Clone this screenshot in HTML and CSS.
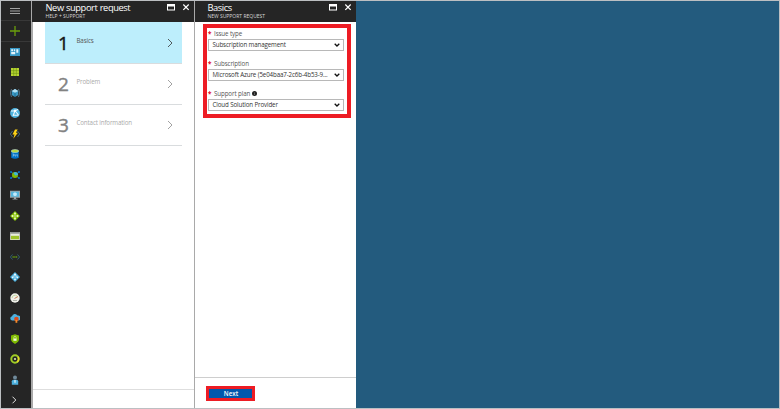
FILE: index.html
```html
<!DOCTYPE html>
<html lang="en">
<head>
<meta charset="utf-8">
<title>New support request</title>
<link rel="stylesheet" href="styles.css">
</head>
<body>
<div class="portal">
  <nav class="rail">
    <span class="cell menu"><svg viewBox="0 0 10 10"><path d="M0 2.5h10M0 5h10M0 7.5h10" stroke="#c4c4c4" stroke-width=".8"/></svg></span>
    <span class="cell add"><svg viewBox="0 0 10 10"><path d="M5 0v10M0 5h10" stroke="#6b9e0c" stroke-width="1.3"/></svg></span>
    <span class="cell"><svg viewBox="0 0 10 10"><path fill="#3999c6" d="M0 1h10v8H0z"/><path fill="#e5f4fb" d="M1.2 2.2h2v2h-2zM4 2.200h1.200v2H4zM6.300 2.200h2v3.500h-2zM1.200 5h4v2.200h-4z"/></svg></span>
    <span class="cell"><svg viewBox="0 0 10 10"><path fill="#b8d432" d="M1 1h8v8H1z"/><path d="M3.700 1v8M6.300 1v8M1 3.700h8M1 6.300h8" stroke="#688d13" stroke-width=".6"/></svg></span>
    <span class="cell"><svg viewBox="0 0 10 10"><path d="M1.500 1Q-1 5 1.500 9M8.500 1q2.500 4 0 8" fill="none" stroke="#58788c" stroke-width=".9"/><path fill="#3999c6" d="M5 1l3.300 1.900v4.200L5 9 1.700 7.100V2.900z"/><path fill="#b5e2f5" d="M5 1l3.300 1.900L5 4.800 1.700 2.900z"/><path d="M5 4.800V9" stroke="#15516f" stroke-width=".6"/></svg></span>
    <span class="cell"><svg viewBox="0 0 10 10"><circle cx="5" cy="5" r="4.900" fill="#4fb3df"/><path d="M1 3l4-.3L8.500 7M5 2.700L3 8M5 2.700L8 1.500M3.500 7l5 .2" stroke="#eef9fe" stroke-width="1.100" fill="none"/><circle cx="5" cy="2.800" r="1.200" fill="#fff"/></svg></span>
    <span class="cell"><svg viewBox="0 0 10 10"><path d="M2.500 2L.3 5l2.200 3M7.500 2l2.200 3-2.200 3" stroke="#42657d" fill="none"/><path fill="#fcd116" d="M5 .5h2.700L5.900 3.700h2L3.300 9.700l1.200-4.200H2.500z"/></svg></span>
    <span class="cell"><svg viewBox="0 0 10 10"><path fill="#0072c6" d="M1.200 2h7.600v6.800Q5 10.800 1.200 8.800z"/><ellipse cx="5" cy="2" rx="3.700" ry="1.500" fill="#b8d432" stroke="#c8e8f5" stroke-width=".5"/><path d="M2.500 5h1.200v2H2.500M5 5v2h1M7 5v2h1" stroke="#b9dcf5" stroke-width=".6" fill="none"/></svg></span>
    <span class="cell"><svg viewBox="0 0 10 10"><path d="M1 2l8 6M9 2L1 8" stroke="#3266a8" stroke-width="1"/><circle cx="5" cy="5" r="3" fill="#7fba00"/><path fill="#3db5dc" d="M5 2a3 3 0 0 1 3 3L5 5.500 3.500 3z"/><g fill="#0072c6"><circle cx="1" cy="2" r="1"/><circle cx="9" cy="2" r="1"/><circle cx="1" cy="8" r="1"/><circle cx="9" cy="8" r="1"/></g></svg></span>
    <span class="cell"><svg viewBox="0 0 10 10"><path fill="#9ba5aa" d="M0 .7h10v7H0zM4 7.700h2v1.200H4zM2.500 8.800h5v.8h-5z"/><path fill="#55b6dd" d="M1 1.700h8v5H1z"/><path fill="#c5eafb" d="M5 2.300l1.800 1v2L5 6.300l-1.800-1v-2z"/></svg></span>
    <span class="cell"><svg viewBox="0 0 10 10"><path fill="#7fba00" d="M5 0l5 5-5 5-5-5z"/><path d="M5 1.500v7M1.500 5h7" stroke="#cfec7e" stroke-width=".7"/><g fill="#effbc9"><circle cx="5" cy="2.500" r=".9"/><circle cx="5" cy="7.500" r=".9"/><circle cx="2.500" cy="5" r=".9"/><circle cx="7.500" cy="5" r=".9"/></g></svg></span>
    <span class="cell"><svg viewBox="0 0 10 10"><path fill="#e8ecdf" d="M.2 1h9.600v8H.2z"/><path fill="#8d9390" d="M.2 1h9.600v1.700H.2z"/><path fill="#9fc52b" d="M1 4.800h8v3.500H1z"/></svg></span>
    <span class="cell"><svg viewBox="0 0 10 10"><path d="M2.500 2.500L.4 5l2.100 2.500M7.500 2.500L9.600 5 7.500 7.500" stroke="#315e70" fill="none"/><path d="M2.500 5h5" stroke="#609514" stroke-width="1.300" stroke-dasharray="1.300 .4"/></svg></span>
    <span class="cell"><svg viewBox="0 0 10 10"><path fill="#49addc" d="M5 0l5 5-5 5-5-5z"/><path d="M5 2L2.600 5.500M5 2l2.400 3.500M5 2v6" stroke="#c8ecfb" stroke-width=".7"/><g fill="#eefaff"><circle cx="5" cy="2.400" r="1"/><circle cx="2.700" cy="5.300" r=".9"/><circle cx="7.300" cy="5.300" r=".9"/><circle cx="5" cy="7.600" r=".8"/></g></svg></span>
    <span class="cell"><svg viewBox="0 0 10 10"><circle cx="5" cy="5" r="4.700" fill="#f1f1ea"/><path d="M2 5a3 3 0 0 1 5-2" stroke="#a9c97a" stroke-width=".7" fill="none"/><path d="M4.500 5.500L8 3.500" stroke="#c1682e" stroke-width=".8"/><path fill="#a1a69c" d="M3 7h4v.8H3z"/></svg></span>
    <span class="cell"><svg viewBox="0 0 10 10"><path fill="#4db1df" d="M2 7.500a2.200 2.200 0 0 1 0-4.300A3 3 0 0 1 7.500 2.500 2.500 2.500 0 0 1 8.500 7.500z"/><circle cx="6.400" cy="6" r="2.300" fill="#dd4b1c"/><path fill="#f58b28" d="M5.500 7h1.800v2.800H5.500z"/></svg></span>
    <span class="cell"><svg viewBox="0 0 10 10"><path fill="#7fba00" d="M5 .2l4 1.300v3.800Q9 8 5 9.900 1 8 1 5.300V1.500z"/><path d="M3.800 4.700V3.600a1.200 1.200 0 0 1 2.400 0v1.100" fill="none" stroke="#e5f3c0" stroke-width=".6"/><path fill="#f2fbda" d="M3.400 4.500h3.200v2.300H3.400z"/></svg></span>
    <span class="cell"><svg viewBox="0 0 10 10"><circle cx="5" cy="5" r="3.700" fill="none" stroke="#9fcc25" stroke-width="2"/><path d="M8 2.800A3.700 3.700 0 0 1 7 8" stroke="#e9d928" stroke-width="1.600" fill="none"/><circle cx="5" cy="5" r="1.100" fill="#d8edaa"/></svg></span>
    <span class="cell"><svg viewBox="0 0 10 10"><path fill="#4db1df" d="M1.800 9.700V6.300Q1.800 4.700 3.500 4.700h3Q8.200 4.700 8.200 6.300v3.400z"/><circle cx="5" cy="2.500" r="2" fill="#718b9c"/><path fill="#d5edf7" d="M4.300 5h1.400v2.800H4.300z"/></svg></span>
    <span class="cell"><svg viewBox="0 0 10 10"><path d="M2.500 1.700L5.800 5 2.500 8.300" stroke="#e0e0e0" fill="none"/></svg></span>
  </nav>

  <section class="blade">
    <header class="bar">
      <div class="heading"><h1>New support request</h1><p>HELP + SUPPORT</p></div>
      <svg class="controls" viewBox="0 0 24 10"><path fill="#fff" d="M1 1h8v6.500H1zM2 3.500v3h6v-3z" fill-rule="evenodd"/><path d="M17.300 1.500l5.400 5.400M22.700 1.500l-5.400 5.400" stroke="#fff" stroke-width="1.200"/></svg>
    </header>
    <ol class="steps">
      <li class="step current"><b>1</b><span>Basics</span><svg viewBox="0 0 6 10"><path d="M1 1l4 4-4 4"/></svg></li>
      <li class="step"><b>2</b><span>Problem</span><svg viewBox="0 0 6 10"><path d="M1 1l4 4-4 4"/></svg></li>
      <li class="step"><b>3</b><span>Contact information</span><svg viewBox="0 0 6 10"><path d="M1 1l4 4-4 4"/></svg></li>
    </ol>
    <footer class="foot"></footer>
  </section>

  <section class="blade detail">
    <header class="bar">
      <div class="heading"><h1>Basics</h1><p>NEW SUPPORT REQUEST</p></div>
      <svg class="controls" viewBox="0 0 24 10"><path fill="#fff" d="M1 1h8v6.500H1zM2 3.500v3h6v-3z" fill-rule="evenodd"/><path d="M17.300 1.500l5.400 5.400M22.700 1.500l-5.400 5.400" stroke="#fff" stroke-width="1.200"/></svg>
    </header>
    <div class="fields">
      <div class="label"><i>*</i>Issue type</div>
      <div class="select"><span>Subscription management</span><svg viewBox="0 0 6 4"><path d="M.7.7L3 3 5.300.7"/></svg></div>
      <div class="label"><i>*</i>Subscription</div>
      <div class="select"><span>Microsoft Azure (5e04baa7-2c6b-4b53-9...</span><svg viewBox="0 0 6 4"><path d="M.7.7L3 3 5.300.7"/></svg></div>
      <div class="label"><i>*</i>Support plan<svg class="info" viewBox="0 0 5 5"><circle cx="2.500" cy="2.500" r="2.500" fill="#222"/><path d="M2.500 2.200v1.800M2.500 1v.6" stroke="#aaa" stroke-width=".5"/></svg></div>
      <div class="select"><span>Cloud Solution Provider</span><svg viewBox="0 0 6 4"><path d="M.7.7L3 3 5.300.7"/></svg></div>
    </div>
    <footer class="foot"><button class="next">Next</button></footer>
  </section>
</div>
</body>
</html>
```
FILE: styles.css
```css
* { box-sizing: border-box; }
body { margin: 0; font-family: "Open Sans", "Noto Sans", sans-serif; }
h1, p, ol { margin: 0; padding: 0; }
svg { display: block; flex: none; }

.portal {
  display: flex;
  width: 780px;
  height: 409px;
  border: 1px solid #bcbfc2;
  background: #235b7e;
}

.rail {
  display: flex;
  flex-direction: column;
  width: 30px;
  overflow: hidden;
  background: #252525;
}
.cell {
  display: flex;
  flex: 0 0 20.500px;
  align-items: center;
  justify-content: center;
  padding-right: 2px;
}
.cell svg { width: 10px; height: 10px; }
.menu { flex-basis: 20px; border-bottom: 1px solid #383838; }
.add { border-bottom: 1px solid #383838; }

.blade {
  display: flex;
  flex-direction: column;
  width: 163px;
  border-left: 2px solid #a9a9a9;
  background: #fff;
}
.detail { width: 162px; border-left-width: 1px; }
.bar {
  display: flex;
  justify-content: space-between;
  height: 21px;
  padding: 1px 0 0 12.500px;
  background: #252525;
  color: #fff;
}
.blade:first-of-type .bar { margin-left: -1px; padding-left: 13.500px; }
.heading h1 {
  height: 11px;
  font-size: 9.300px;
  font-weight: 400;
  line-height: 12px;
  letter-spacing: -.42px;
  word-spacing: .4px;
  white-space: nowrap;
}
.heading p {
  font-size: 5px;
  line-height: 7px;
  color: #d8d8d8;
  white-space: nowrap;
}
.controls { width: 24px; height: 10px; margin: 1px 4px 0 0; }

.steps {
  flex: 1;
  width: 137px;
  margin-left: 12px;
  list-style: none;
}
.step {
  display: flex;
  height: 41px;
  padding: 0 9px 0 13px;
  border-bottom: 1px solid #d9dcde;
  color: #aaa;
  font-size: 6.200px;
  letter-spacing: -.13px;
}
.step b {
  width: 18.500px;
  color: #828282;
  font: 400 19px/41px "Open Sans", sans-serif;
  -webkit-text-stroke: .4px currentColor;
}
.step span { flex: 1; padding-top: 14px; line-height: 8px; white-space: nowrap; }
.step svg { width: 6px; height: 10px; margin-top: 15px; }
.step path { fill: none; stroke: #8a8a8a; stroke-width: .8; }
.current { height: 42px; background: #bdeefc; color: #555; }
.current span { padding-top: 15px; }
.current svg { margin-top: 16px; }
.current b { padding-top: 1px; color: #151515; }
.current path { stroke: #333; }

.foot { height: 19px; border-top: 1px solid #dedede; }
.detail .foot { height: 31px; padding: 8px 0 0 11px; border-color: #cecece; }

.fields {
  width: 148px;
  height: 94px;
  margin: 2px 0 auto 8px;
  padding: 1px 3px 0 .5px;
  border: 4px solid #ed1c24;
}
.label {
  display: flex;
  align-items: center;
  height: 9px;
  margin-bottom: 1px;
  padding-left: .5px;
  color: #555;
  font-size: 6.200px;
  line-height: 9px;
  letter-spacing: -.1px;
}
.label i { width: 6px; color: #e0001b; font-style: normal; font-weight: 700; }
.info { width: 5px; height: 5px; margin-left: 2px; }
.select {
  display: flex;
  align-items: center;
  justify-content: space-between;
  height: 12px;
  margin-bottom: 8px;
  padding: 0 3px 0 4px;
  border: 1px solid #b8b8b8;
  color: #333;
  font-size: 6.200px;
  line-height: 10px;
  letter-spacing: -.12px;
  white-space: nowrap;
}
.select svg { width: 6px; height: 4px; }
.select path { fill: none; stroke: #111; stroke-width: 1.300; }

.next {
  display: block;
  width: 49px;
  height: 15px;
  padding: 0 0 0 1px;
  border: 3px solid #ed1c24;
  background: #0058ad;
  color: #fff;
  font: 600 6.200px/9px "Open Sans", sans-serif;
}
```
